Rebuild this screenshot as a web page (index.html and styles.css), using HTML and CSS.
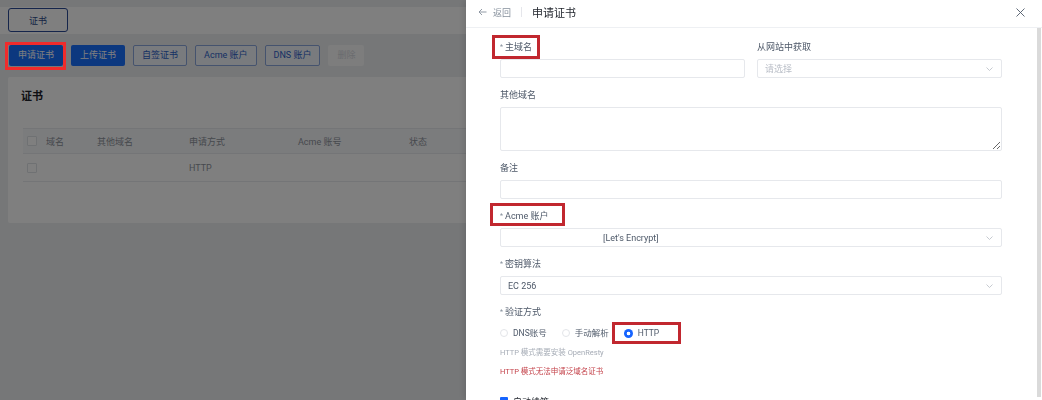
FILE: index.html
```html
<!DOCTYPE html>
<html lang="zh-CN">
<head>
<meta charset="utf-8">
<title>申请证书</title>
<link rel="stylesheet" href="styles.css">
</head>
<body>
<div class="page">
  <div class="tabbar"><div class="tab">证书</div></div>
  <div class="toolbar">
    <span class="btn-wrap"><button class="btn primary">申请证书</button><span class="annot"></span></span>
    <button class="btn primary">上传证书</button>
    <button class="btn outline">自签证书</button>
    <button class="btn outline">Acme 账户</button>
    <button class="btn outline">DNS 账户</button>
    <button class="btn disabled">删除</button>
  </div>
  <div class="card">
    <div class="card-title">证书</div>
    <table class="table">
      <colgroup>
        <col class="w-check"><col class="w-domain"><col class="w-other"><col class="w-method"><col class="w-acme"><col class="w-status"><col>
      </colgroup>
      <thead>
        <tr><th><span class="cb"></span></th><th>域名</th><th>其他域名</th><th>申请方式</th><th>Acme 账号</th><th>状态</th><th></th></tr>
      </thead>
      <tbody>
        <tr><td><span class="cb"></span></td><td></td><td></td><td>HTTP</td><td></td><td></td><td></td></tr>
      </tbody>
    </table>
  </div>
</div>
<div class="mask"></div>
<aside class="drawer">
  <div class="drawer-head">
    <span class="back">
      <svg class="arrow" width="9" height="8" viewBox="0 0 9 8"><path d="M8.5 4H1M4 1L1 4l3 3" fill="none" stroke="#86909c" stroke-width="0.9"/></svg>
      返回
    </span>
    <span class="sep"></span>
    <span class="title">申请证书</span>
    <svg class="close" width="9" height="9" viewBox="0 0 9 9"><path d="M0.5 0.5l8 8M8.5 0.5l-8 8" stroke="#4e5969" stroke-width="0.9"/></svg>
  </div>
  <div class="drawer-main">
    <div class="drawer-body">
      <div class="form-row">
        <div class="field">
          <div class="label"><span class="mark mark-main"><span class="req">*</span>主域名</span></div>
          <input class="input" type="text">
        </div>
        <div class="field">
          <div class="label">从网站中获取</div>
          <div class="select"><span class="placeholder">请选择</span><svg class="chev" width="7" height="4" viewBox="0 0 7 4"><path d="M0.5 0.5l3 3 3-3" fill="none" stroke="#b8bcc4" stroke-width="0.8"/></svg></div>
        </div>
      </div>
      <div class="field">
        <div class="label">其他域名</div>
        <textarea class="textarea"></textarea>
      </div>
      <div class="field">
        <div class="label">备注</div>
        <input class="input" type="text">
      </div>
      <div class="field">
        <div class="label"><span class="mark mark-acme"><span class="req">*</span>Acme 账户</span></div>
        <div class="select"><span class="value acme-value">[Let's Encrypt]</span><svg class="chev" width="7" height="4" viewBox="0 0 7 4"><path d="M0.5 0.5l3 3 3-3" fill="none" stroke="#b8bcc4" stroke-width="0.8"/></svg></div>
      </div>
      <div class="field">
        <div class="label"><span class="req">*</span>密钥算法</div>
        <div class="select"><span class="value">EC 256</span><svg class="chev" width="7" height="4" viewBox="0 0 7 4"><path d="M0.5 0.5l3 3 3-3" fill="none" stroke="#b8bcc4" stroke-width="0.8"/></svg></div>
      </div>
      <div class="field field-last">
        <div class="label"><span class="req">*</span>验证方式</div>
        <div class="radios">
          <span class="radio"><span class="dot"></span>DNS账号</span>
          <span class="radio"><span class="dot"></span>手动解析</span>
          <span class="radio checked mark mark-http"><span class="dot"></span>HTTP</span>
        </div>
        <div class="help">HTTP 模式需要安装 OpenResty</div>
        <div class="help warn">HTTP 模式无法申请泛域名证书</div>
      </div>
      <div class="check-row"><span class="check"></span>自动续签</div>
    </div>
    <div class="scrollbar"><div class="thumb"></div></div>
  </div>
</aside>
</body>
</html>
```
FILE: styles.css
```css
html, body {
  margin: 0;
  height: 100%;
  overflow: hidden;
}
body {
  font-family: Roboto, "Noto Sans CJK SC", sans-serif;
  background: #eceef1;
}

/* ---------- page underneath ---------- */
.page {
  height: 100vh;
  box-sizing: border-box;
  padding-top: 7px;
  background: #eceef1;
}
.tabbar {
  height: 27px;
  box-sizing: border-box;
  padding: 1px 8px 0;
  background: #fff;
}
.tab {
  width: 60px;
  height: 24px;
  box-sizing: border-box;
  border: 1px solid #2a4a96;
  border-radius: 3px;
  background: #fff;
  display: flex;
  align-items: center;
  justify-content: center;
  font-size: 9px;
  color: #2e4a8a;
}
.toolbar {
  display: flex;
  gap: 8px;
  padding: 11px 9px 0;
  height: 21px;
}
.btn-wrap {
  position: relative;
  display: flex;
}
.annot {
  position: absolute;
  top: -3px;
  bottom: -4px;
  left: -4px;
  right: -3px;
  border: 3px solid #f02b2b;
  z-index: 15;
}
.btn {
  height: 21px;
  padding: 0 8px;
  border: 1px solid transparent;
  border-radius: 2px;
  font-family: inherit;
  font-size: 9px;
  line-height: 19px;
  margin: 0;
}
.btn.primary {
  background: #1870ff;
  color: #fff;
}
.btn.outline {
  background: #f3f6fd;
  border-color: #8aa6dc;
  color: #2c62c8;
}
.btn.disabled {
  background: #fafafa;
  color: #d5d8de;
}
.card {
  margin: 11px 8px 0;
  height: 146px;
  box-sizing: border-box;
  padding: 12px 15px 0;
  background: #fff;
  border-radius: 2px;
}
.card-title {
  font-size: 11px;
  font-weight: 700;
  line-height: 16px;
  color: #1d2129;
  margin-left: -2px;
}
.table {
  margin-top: 23px;
  width: 1000px;
  table-layout: fixed;
  border-collapse: collapse;
  font-size: 9px;
  color: #8d939c;
}
.w-check { width: 19px; }
.w-domain { width: 51px; }
.w-other { width: 92px; }
.w-method { width: 109px; }
.w-acme { width: 111px; }
.w-status { width: 110px; }
.table th {
  height: 24px;
  padding: 0 4px;
  text-align: left;
  font-weight: 400;
  background: #f7f8fa;
  border-top: 1px solid #e8eaee;
  border-bottom: 1px solid #e8eaee;
}
.table td {
  height: 27px;
  padding: 0 4px;
  border-bottom: 1px solid #e8eaee;
}
.cb {
  display: block;
  width: 8px;
  height: 8px;
  border: 1px solid #dfe2e6;
  border-radius: 1px;
  background: #fff;
}

.mask {
  position: fixed;
  inset: 0;
  background: rgba(0, 0, 0, 0.5);
  z-index: 10;
}

/* ---------- drawer ---------- */
.drawer {
  position: fixed;
  top: 0;
  right: 0;
  bottom: 0;
  width: 576px;
  background: #fff;
  z-index: 20;
  display: flex;
  flex-direction: column;
  box-shadow: -2px 0 6px rgba(0, 0, 0, 0.12);
}
.drawer-head {
  flex: none;
  height: 28px;
  box-sizing: border-box;
  padding: 0 17px 3px 12px;
  border-bottom: 1px solid #eef0f3;
  display: flex;
  align-items: center;
}
.back {
  display: flex;
  align-items: center;
  gap: 6px;
  font-size: 9px;
  color: #86909c;
}
.sep {
  width: 1px;
  height: 10px;
  background: #e5e6eb;
  margin: 0 10px;
}
.title {
  font-size: 11px;
  color: #1d2129;
  font-weight: 400;
}
.close {
  margin-left: auto;
}
.drawer-main {
  flex: 1;
  min-height: 0;
  display: flex;
}
.drawer-body {
  flex: 1;
  min-width: 0;
  overflow: hidden;
  padding: 12px 34px 0;
}
.scrollbar {
  flex: none;
  width: 6px;
  box-sizing: border-box;
  padding: 0 1px 3px;
}
.thumb {
  height: 100%;
  background: #dadada;
}
.form-row {
  display: flex;
  gap: 12px;
}
.form-row .field {
  flex: 1;
  min-width: 0;
}
.field {
  margin-bottom: 10px;
}
.label {
  font-size: 9px;
  line-height: 14px;
  height: 14px;
  margin-bottom: 5px;
  color: #4e5969;
}
.req {
  font-size: 7px;
  color: #86909c;
  margin-right: 2px;
  vertical-align: 1px;
}
.mark {
  position: relative;
  display: inline-block;
}
.mark::after {
  content: "";
  position: absolute;
  border: 3px solid #c1272f;
  box-sizing: border-box;
}
.mark-main::after {
  top: -5px;
  bottom: -5px;
  left: -8px;
  right: -8px;
}
.mark-acme::after {
  top: -6px;
  bottom: -3px;
  left: -10px;
  right: -16px;
}
.mark-http::after {
  top: -4px;
  bottom: -4px;
  left: -12px;
  right: -22px;
}
.input, .select, .textarea {
  display: block;
  width: 100%;
  box-sizing: border-box;
  border: 1px solid #e6e8ec;
  border-radius: 2px;
  background: #fff;
  margin: 0;
  font-family: inherit;
  font-size: 9px;
  color: #4e5969;
}
.input {
  height: 19px;
  padding: 0 7px;
  outline: none;
}
.textarea {
  height: 44px;
  padding: 4px 7px;
  resize: vertical;
  outline: none;
}
.select {
  height: 19px;
  padding: 0 8px 0 7px;
  display: flex;
  align-items: center;
}
.select .chev {
  margin-left: auto;
}
.placeholder {
  color: #b9bec7;
}
.value {
  color: #4e5969;
}
.acme-value {
  margin-left: 95px;
}
.radios {
  height: 18px;
  display: flex;
  align-items: center;
  gap: 15px;
}
.radio {
  display: inline-flex;
  align-items: center;
  gap: 5px;
  font-size: 8.5px;
  line-height: 14px;
  color: #4e5969;
}
.dot {
  width: 8px;
  height: 8px;
  box-sizing: border-box;
  border-radius: 50%;
  border: 1px solid #e3e5e9;
  background: #fff;
}
.radio.checked .dot {
  width: 9px;
  height: 9px;
  border: none;
  background: radial-gradient(circle, #fff 0 1.6px, #1664ff 2.1px);
}
.help {
  font-size: 7.5px;
  line-height: 12px;
  color: #a6acb6;
  margin-top: 5px;
}
.help.warn {
  color: #c4424a;
  margin-top: 7px;
}
.field-last {
  margin-bottom: 0;
}
.check-row {
  margin-top: 16px;
  display: flex;
  align-items: center;
  gap: 5px;
  height: 14px;
  font-size: 9px;
  color: #1d2129;
}
.check {
  width: 8px;
  height: 8px;
  border-radius: 1px;
  background: #1664ff;
}
```
